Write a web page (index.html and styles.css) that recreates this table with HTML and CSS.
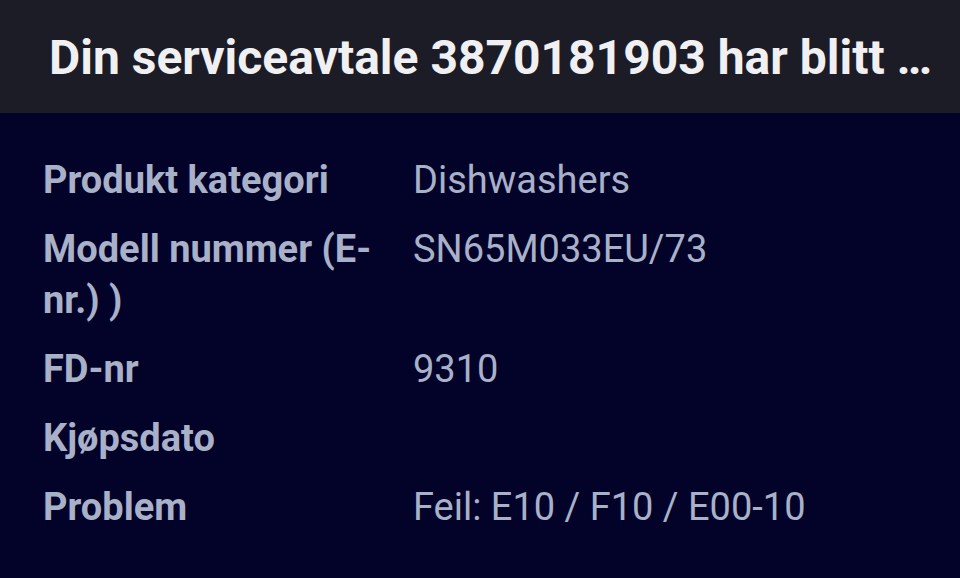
FILE: index.html
```html
<!DOCTYPE html>
<html lang="no">
<head>
  <meta charset="UTF-8">
  <title>Serviceavtale</title>
  <link rel="stylesheet" href="styles.css">
</head>
<body>

  <header class="topbar">
    <h1 class="title">Din serviceavtale 3870181903 har blitt …</h1>
  </header>

  <main class="details">
    <div class="label">Produkt kategori</div>
    <div class="value">Dishwashers</div>

    <div class="label">Modell nummer (E-nr.) )</div>
    <div class="value">SN65M033EU/73</div>

    <div class="label">FD-nr</div>
    <div class="value">9310</div>

    <div class="label">Kjøpsdato</div>
    <div class="value"></div>

    <div class="label">Problem</div>
    <div class="value">Feil: E10 / F10 / E00-10</div>
  </main>

</body>
</html>
```

FILE: styles.css
```css
html, body {
  margin: 0;
  height: 100%;
}

body {
  font-family: Roboto, "Noto Sans", sans-serif;
  background-color: #03032a;
  overflow: hidden;
}

.topbar {
  background-color: #1c1c26;
  height: 113px;
  display: flex;
  align-items: center;
  padding: 2px 20px 0 49px;
  box-sizing: border-box;
}

.title {
  margin: 0;
  color: #f0f0f2;
  font-size: 48px;
  font-weight: 700;
  white-space: nowrap;
}

.details {
  display: grid;
  grid-template-columns: 340px 1fr;
  column-gap: 30px;
  row-gap: 18px;
  padding: 42px 20px 0 43px;
  color: #a8b1c8;
  font-size: 38px;
  line-height: 51px;
}

.label {
  font-weight: 700;
}

.value {
  font-weight: 400;
}
```
